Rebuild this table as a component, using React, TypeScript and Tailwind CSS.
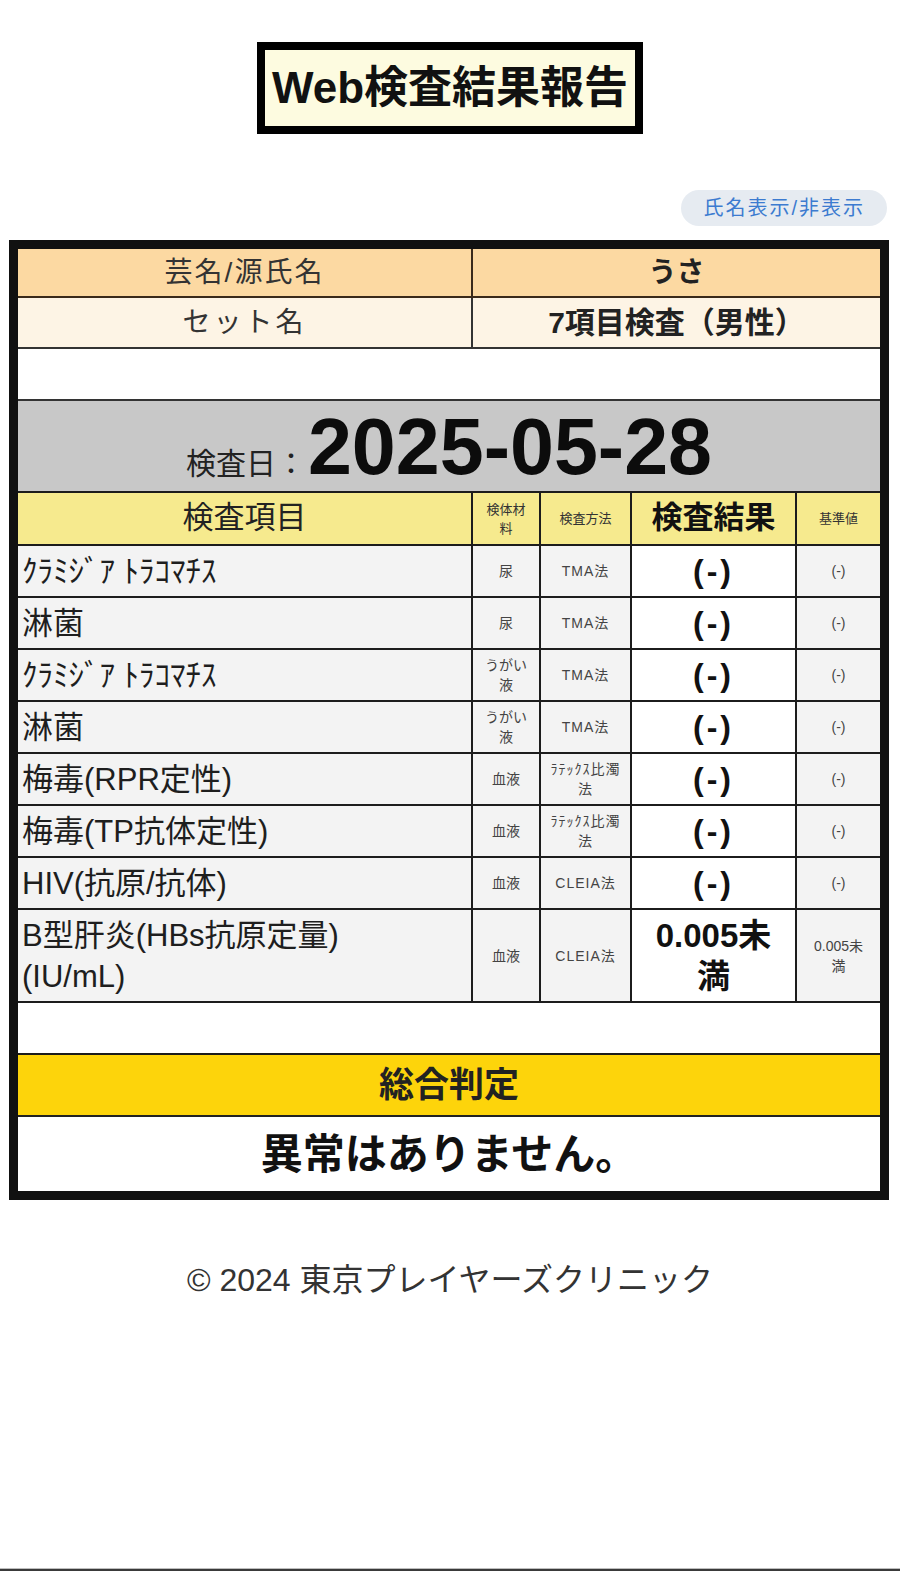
import React from "react";

const font = "font-['Liberation_Sans','Noto_Sans_CJK_JP',sans-serif]";

type Row = {
  name: string;
  sample: string;
  method: string;
  result: string;
  ref: string;
  tall?: boolean;
};

const rows: Row[] = [
  { name: "ｸﾗﾐｼﾞｱ ﾄﾗｺﾏﾁｽ", sample: "尿", method: "TMA法", result: "(-)", ref: "(-)" },
  { name: "淋菌", sample: "尿", method: "TMA法", result: "(-)", ref: "(-)" },
  { name: "ｸﾗﾐｼﾞｱ ﾄﾗｺﾏﾁｽ", sample: "うがい\n液", method: "TMA法", result: "(-)", ref: "(-)" },
  { name: "淋菌", sample: "うがい\n液", method: "TMA法", result: "(-)", ref: "(-)" },
  { name: "梅毒(RPR定性)", sample: "血液", method: "ﾗﾃｯｸｽ比濁\n法", result: "(-)", ref: "(-)" },
  { name: "梅毒(TP抗体定性)", sample: "血液", method: "ﾗﾃｯｸｽ比濁\n法", result: "(-)", ref: "(-)" },
  { name: "HIV(抗原/抗体)", sample: "血液", method: "CLEIA法", result: "(-)", ref: "(-)" },
  {
    name: "B型肝炎(HBs抗原定量)\n(IU/mL)",
    sample: "血液",
    method: "CLEIA法",
    result: "0.005未\n満",
    ref: "0.005未\n満",
    tall: true,
  },
];

const cols = "grid grid-cols-[453px_68px_91px_165px_85px]";

function ResultRow({ row }: { row: Row }) {
  const h = row.tall ? "h-[93px]" : "h-[52px]";
  return (
    <div className={`${cols} ${h} border-b-2 border-[#1c1c1c] bg-[#f3f3f3]`}>
      <div className="flex items-center whitespace-pre-line pl-[4px] text-[31px] leading-[41px] text-[#1e1e1e]">
        {row.name}
      </div>
      <div className="flex items-center justify-center whitespace-pre-line border-l-2 border-[#1c1c1c] text-center text-[14px] leading-[20px] text-[#444]">
        {row.sample}
      </div>
      <div className="flex items-center justify-center whitespace-pre-line border-l-2 border-[#1c1c1c] text-center text-[14px] leading-[20px] tracking-[1px] text-[#444]">
        {row.method}
      </div>
      <div
        className={`flex items-center justify-center whitespace-pre-line border-l-2 border-[#1c1c1c] bg-white text-center font-bold text-[#111] ${
          row.tall ? "text-[33px] leading-[41px]" : "text-[32px] leading-[40px] tracking-[3px]"
        }`}
      >
        {row.result}
      </div>
      <div className="flex items-center justify-center whitespace-pre-line border-l-2 border-[#1c1c1c] text-center text-[14px] leading-[20px] text-[#444]">
        {row.ref}
      </div>
    </div>
  );
}

export default function App() {
  return (
    <div className={`${font} flex min-h-[1571px] w-[900px] flex-col bg-white`}>
      <div className="mx-auto mt-[42px] flex h-[92px] w-[386px] items-center justify-center border-[8px] border-black bg-[#fdfbe0]">
        <span className="text-[44px] font-bold leading-none text-[#111]">Web検査結果報告</span>
      </div>

      <div className="mr-[13px] mt-[56px] flex justify-end">
        <button className="flex h-[36px] items-center rounded-full bg-[#e6ebf1] px-[22px] text-[20px] tracking-[2px] text-[#3c7bd0]">
          氏名表示/非表示
        </button>
      </div>

      <div className="ml-[9px] mt-[14px] w-[880px] border-[9px] border-[#111]">
        <div className="grid h-[49px] grid-cols-[453px_409px] border-b-2 border-[#3a2a1a] bg-[#fcd9a2]">
          <div className="flex items-center justify-center text-[28px] tracking-[2px] text-[#333]">芸名/源氏名</div>
          <div className="flex items-center justify-center border-l-2 border-[#3a2a1a] text-[28px] font-bold text-[#222]">
            うさ
          </div>
        </div>
        <div className="grid h-[51px] grid-cols-[453px_409px] border-b-2 border-[#333] bg-[#fdf4e5]">
          <div className="flex items-center justify-center text-[28px] tracking-[3px] text-[#333]">セット名</div>
          <div className="flex items-center justify-center border-l-2 border-[#333] text-[30px] font-bold text-[#222]">
            7項目検査（男性）
          </div>
        </div>
        <div className="h-[52px] border-b-2 border-[#333] bg-white" />
        <div className="flex h-[92px] items-baseline justify-center border-b-2 border-[#1c1c1c] bg-[#c8c8c8] pt-[6px]">
          <span className="text-[30px] text-[#222]">検査日：</span>
          <span className="ml-[2px] text-[79px] font-bold leading-[79px] text-[#0c0c0c]">2025-05-28</span>
        </div>
        <div className={`${cols} h-[53px] border-b-2 border-[#1c1c1c] bg-[#f6ea8e]`}>
          <div className="flex items-center justify-center text-[31px] text-[#222]">検査項目</div>
          <div className="flex items-center justify-center whitespace-pre-line border-l-2 border-[#1c1c1c] text-center text-[13px] leading-[19px] text-[#333]">
            {"検体材\n料"}
          </div>
          <div className="flex items-center justify-center border-l-2 border-[#1c1c1c] text-[13px] text-[#333]">
            検査方法
          </div>
          <div className="flex items-center justify-center border-l-2 border-[#1c1c1c] text-[31px] font-bold text-[#111]">
            検査結果
          </div>
          <div className="flex items-center justify-center border-l-2 border-[#1c1c1c] text-[13px] text-[#333]">
            基準値
          </div>
        </div>
        {rows.map((row, i) => (
          <ResultRow key={i} row={row} />
        ))}
        <div className="h-[52px] border-b-2 border-[#1c1c1c] bg-white" />
        <div className="flex h-[62px] items-center justify-center border-b-2 border-[#222] bg-[#fdd40b]">
          <span className="text-[35px] font-bold text-[#222]">総合判定</span>
        </div>
        <div className="flex h-[74px] items-center justify-center bg-white">
          <span className="text-[42px] font-bold text-[#111]">異常はありません。</span>
        </div>
      </div>

      <div className="mt-[60px] text-center text-[32px] leading-[40px] text-[#333]">
        © 2024 東京プレイヤーズクリニック
      </div>

      <div className="mt-auto h-[3px] border-t border-[#bdbdbd] bg-[#3a3a3a]" />
    </div>
  );
}
